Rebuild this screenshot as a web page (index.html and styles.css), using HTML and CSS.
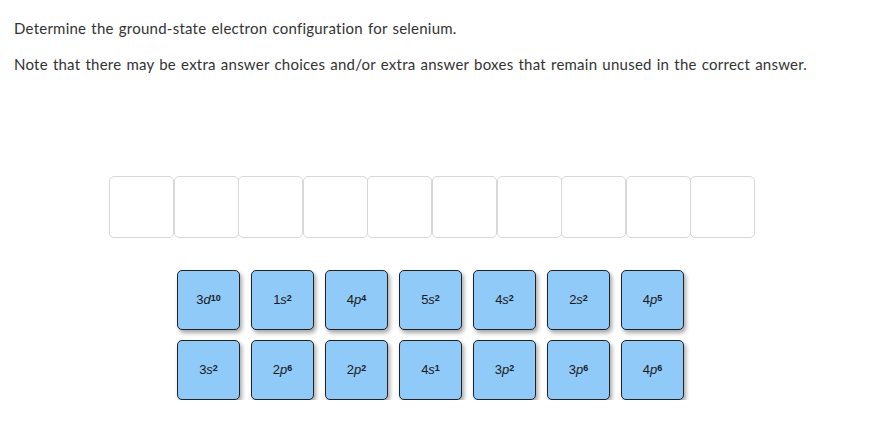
FILE: index.html
```html
<!DOCTYPE html>
<html>
<head>
<meta charset="utf-8">
<link rel="stylesheet" href="styles.css">
</head>
<body>
<div class="page">
  <p class="q q1">Determine the ground-state electron configuration for selenium.</p>
  <p class="q q2">Note that there may be extra answer choices and/or extra answer boxes that remain unused in the correct answer.</p>
  <div class="slots">
    <div class="slot"></div><div class="slot"></div><div class="slot"></div><div class="slot"></div><div class="slot"></div>
    <div class="slot"></div><div class="slot"></div><div class="slot"></div><div class="slot"></div><div class="slot"></div>
  </div>
  <div class="tiles">
    <div class="tile"><span class="lbl">3<i>d</i><sup>10</sup></span></div>
    <div class="tile"><span class="lbl">1<i>s</i><sup>2</sup></span></div>
    <div class="tile"><span class="lbl">4<i>p</i><sup>4</sup></span></div>
    <div class="tile"><span class="lbl">5<i>s</i><sup>2</sup></span></div>
    <div class="tile"><span class="lbl">4<i>s</i><sup>2</sup></span></div>
    <div class="tile"><span class="lbl">2<i>s</i><sup>2</sup></span></div>
    <div class="tile"><span class="lbl">4<i>p</i><sup>5</sup></span></div>
    <div class="tile"><span class="lbl">3<i>s</i><sup>2</sup></span></div>
    <div class="tile"><span class="lbl">2<i>p</i><sup>6</sup></span></div>
    <div class="tile"><span class="lbl">2<i>p</i><sup>2</sup></span></div>
    <div class="tile"><span class="lbl">4<i>s</i><sup>1</sup></span></div>
    <div class="tile"><span class="lbl">3<i>p</i><sup>2</sup></span></div>
    <div class="tile"><span class="lbl">3<i>p</i><sup>6</sup></span></div>
    <div class="tile"><span class="lbl">4<i>p</i><sup>6</sup></span></div>
  </div>
</div>
</body>
</html>
```
FILE: styles.css
```css
html, body {
  margin: 0;
  padding: 0;
  background: #ffffff;
}
.page {
  padding: 0 0 0 14px;
  font-family: Lato, "Open Sans", sans-serif;
  color: #333333;
}
.q {
  margin: 0;
  font-size: 15px;
  line-height: 20px;
  letter-spacing: 0.24px;
  word-spacing: 1px;
}
.q1 {
  padding-top: 18px;
}
.q2 {
  padding-top: 16px;
}
.slots {
  display: flex;
  margin: 102px 0 0 95px;
}
.slot {
  width: 63px;
  height: 60px;
  border: 1px solid #d8d8d8;
  border-radius: 5px;
  margin-right: -0.4px;
  box-sizing: content-box;
}
.tiles {
  display: grid;
  grid-template-columns: repeat(7, 63px);
  grid-auto-rows: 60px;
  column-gap: 11px;
  row-gap: 10px;
  margin: 32px 0 0 163px;
}
.tile {
  box-sizing: border-box;
  background: #90caf9;
  border: 1px solid #222222;
  border-radius: 5px;
  box-shadow: 2px 3px 4px rgba(0, 0, 0, 0.35);
  display: flex;
  align-items: center;
  justify-content: center;
  font-family: "Liberation Sans", Arial, sans-serif;
  font-size: 13px;
  color: #1a1a1a;
}
.lbl {
  line-height: 16px;
}
.lbl i {
  font-style: italic;
}
.lbl sup {
  font-size: 9px;
  font-weight: bold;
  line-height: 0;
  vertical-align: 3px;
}
```
